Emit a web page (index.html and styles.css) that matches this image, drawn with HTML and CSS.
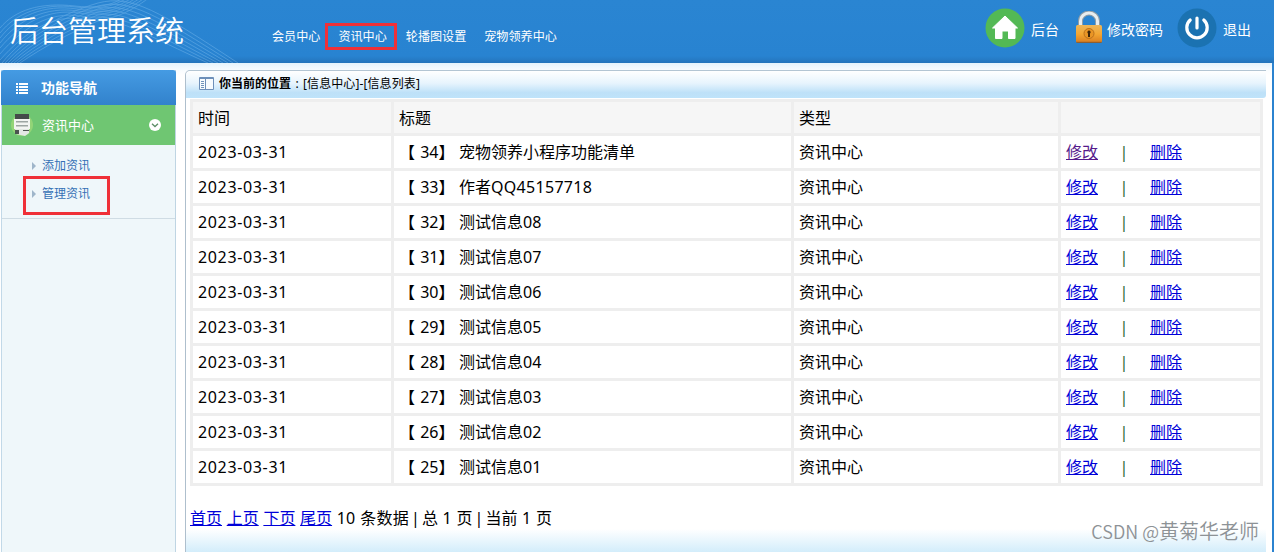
FILE: index.html
```html
<!DOCTYPE html>
<html lang="zh-CN">
  <head>
    <meta charset="UTF-8" />
    <title>后台管理系统</title>
    <link rel="stylesheet" href="styles.css">
  </head>
  <body>
    <header class="header">
      <svg class="waves" width="260" height="63" viewBox="0 0 260 63">
        <g id="rise">
          <path d="M0 28C15 10 40 2 75 6S120 -1 130 -6" />
          <path d="M0 33C16 13 42 3 76 7S122 1 134 -6" />
          <path d="M0 38C17 16 44 4 77 9S124 3 138 -6" />
          <path d="M0 43C18 20 46 6 78 11S126 5 142 -6" />
          <path d="M0 48C20 24 48 8 79 13S128 7 146 -6" />
          <path d="M0 54C22 28 50 11 80 16S130 9 150 -6" />
          <path d="M0 60C24 33 52 14 81 19S132 11 154 -6" />
        </g>
        <g id="fall">
          <path d="M2 63C25 35 60 14 98 3C132 -6 160 12 238 63" />
          <path d="M5 63C28 37 62 17 98 6C130 -2 158 16 233 63" />
          <path d="M8 63C31 39 64 20 98 9C128 2 156 20 228 63" />
          <path d="M11 63C34 41 66 23 98 12C126 6 154 24 223 63" />
          <path d="M14 63C37 43 68 26 98 15C124 10 152 28 218 63" />
          <path d="M17 63C40 45 70 29 98 18C122 14 150 32 213 63" />
          <path d="M20 63C43 47 72 32 98 21C120 18 148 36 208 63" />
        </g>
      </svg>
      <h1 class="title">后台管理系统</h1>
      <nav class="nav">
        <a href="#">会员中心</a>
        <a href="#" class="current">资讯中心</a>
        <a href="#">轮播图设置</a>
        <a href="#">宠物领养中心</a>
      </nav>
      <div class="tools">
        <a href="#" class="home">
          <svg width="40" height="40" viewBox="0 0 40 40">
            <circle cx="20" cy="20" r="19.5" fill="#53b955" />
            <path d="M20 8L32.500 20H30V30.500H23.500V23H17V30.500H10.500V20H7.500Z" fill="#fff" stroke="#fff" stroke-linejoin="round" />
          </svg>
          <span>后台</span>
        </a>
        <a href="#" class="lock">
          <svg width="28" height="34" viewBox="0 0 28 34">
            <defs>
              <linearGradient id="gold" x2="0" y2="1">
                <stop offset="0" stop-color="#edb65a" />
                <stop offset=".5" stop-color="#f3a632" />
                <stop offset=".9" stop-color="#de8422" />
                <stop offset="1" stop-color="#725034" />
              </linearGradient>
            </defs>
            <path d="M5.500 17V10a8.500 8 0 0 1 17 0v7" fill="none" stroke="#8d9da8" stroke-width="5" />
            <path d="M5.500 17V10a8.500 8 0 0 1 17 0v7" fill="none" stroke="#e8edef" stroke-width="3" />
            <rect x="1" y="14" width="26" height="18" rx="1.500" fill="url(#gold)" />
            <circle cx="14" cy="22.500" r="5" fill="#e99525" stroke="#bb711c" />
            <path d="M14 19.500a1.700 1.700 0 0 1 1 3v3.500h-2v-3.500a1.700 1.700 0 0 1 1-3z" fill="#3c2409" />
          </svg>
          <span>修改密码</span>
        </a>
        <a href="#" class="exit">
          <svg width="40" height="40" viewBox="0 0 40 40">
            <circle cx="20" cy="20" r="19.500" fill="#1b72b1" />
            <path d="M13.200 12a10.200 10.200 0 1 0 13.600 0M20 10v10" fill="none" stroke="#fff" stroke-width="3.200" stroke-linecap="round" />
          </svg>
          <span>退出</span>
        </a>
      </div>
    </header>

    <div class="wrap">
      <aside class="sidebar">
        <div class="side-title">
          <svg width="12" height="12" viewBox="0 0 12 12" fill="#fff">
            <path d="M0 1h2v2H0zM3 1h9v2H3zM0 4h2v2H0zM3 4h9v2H3zM0 7h2v2H0zM3 7h9v2H3zM0 10h2v2H0zM3 10h9v2H3z" />
          </svg>
          <span>功能导航</span>
        </div>
        <div class="side-group">
          <svg width="24" height="24" viewBox="0 0 24 24">
            <circle cx="12" cy="12" r="11" fill="#93d477" />
            <path d="M5 1h14v6H5z" fill="#444b49" />
            <path d="M4 6h16v10H4z" fill="#f2f4f1" />
            <path d="M6 8h12v1.500H6zM6 12h12v1.500H6z" fill="#9da5a2" />
            <path d="M5 16h14v4l-4 3-9-2z" fill="#e3e8e3" />
            <path d="M5 17h4v4H5zM13 17h6v1h-6z" fill="#4b5350" />
          </svg>
          <span>资讯中心</span>
          <svg class="toggle" width="12" height="12" viewBox="0 0 12 12">
            <circle cx="6" cy="6" r="6" fill="#fff" />
            <path d="M3 4.700l3 2.800 3-2.800" fill="none" stroke="#5c8d67" stroke-width="1.300" />
          </svg>
        </div>
        <ul class="side-list">
          <li><a href="#">添加资讯</a></li>
          <li class="current"><a href="#">管理资讯</a></li>
        </ul>
      </aside>

      <main class="main">
        <div class="crumb">
          <svg width="15" height="14" viewBox="0 0 15 14">
            <path d="M.5.5h14v12H.5z" fill="#f7fbfe" stroke="#6d8fb9" />
            <path d="M0 1.500h15M6.500 2v11" stroke="#6d8fb9" />
            <path d="M2 4.500h3M2 6.500h3M2 8.500h3M2 10.500h3" stroke="#7194bb" />
          </svg>
          <b>你当前的位置</b><i>:</i><span>[信息中心]-[信息列表]</span>
        </div>
        <table class="list">
          <colgroup>
            <col class="c-date"><col class="c-title"><col class="c-type"><col class="c-action">
          </colgroup>
          <thead>
            <tr><th>时间</th><th>标题</th><th>类型</th><th></th></tr>
          </thead>
          <tbody>
            <tr>
              <td class="date">2023-03-31</td>
              <td><span class="no">【 34】</span>宠物领养小程序功能清单</td>
              <td>资讯中心</td>
              <td><a href="#" class="visited">修改</a><span class="bar">|</span><a href="#">删除</a></td>
            </tr>
            <tr>
              <td class="date">2023-03-31</td>
              <td><span class="no">【 33】</span>作者<span class="qq">QQ45157718</span></td>
              <td>资讯中心</td>
              <td><a href="#">修改</a><span class="bar">|</span><a href="#">删除</a></td>
            </tr>
            <tr>
              <td class="date">2023-03-31</td>
              <td><span class="no">【 32】</span>测试信息08</td>
              <td>资讯中心</td>
              <td><a href="#">修改</a><span class="bar">|</span><a href="#">删除</a></td>
            </tr>
            <tr>
              <td class="date">2023-03-31</td>
              <td><span class="no">【 31】</span>测试信息07</td>
              <td>资讯中心</td>
              <td><a href="#">修改</a><span class="bar">|</span><a href="#">删除</a></td>
            </tr>
            <tr>
              <td class="date">2023-03-31</td>
              <td><span class="no">【 30】</span>测试信息06</td>
              <td>资讯中心</td>
              <td><a href="#">修改</a><span class="bar">|</span><a href="#">删除</a></td>
            </tr>
            <tr>
              <td class="date">2023-03-31</td>
              <td><span class="no">【 29】</span>测试信息05</td>
              <td>资讯中心</td>
              <td><a href="#">修改</a><span class="bar">|</span><a href="#">删除</a></td>
            </tr>
            <tr>
              <td class="date">2023-03-31</td>
              <td><span class="no">【 28】</span>测试信息04</td>
              <td>资讯中心</td>
              <td><a href="#">修改</a><span class="bar">|</span><a href="#">删除</a></td>
            </tr>
            <tr>
              <td class="date">2023-03-31</td>
              <td><span class="no">【 27】</span>测试信息03</td>
              <td>资讯中心</td>
              <td><a href="#">修改</a><span class="bar">|</span><a href="#">删除</a></td>
            </tr>
            <tr>
              <td class="date">2023-03-31</td>
              <td><span class="no">【 26】</span>测试信息02</td>
              <td>资讯中心</td>
              <td><a href="#">修改</a><span class="bar">|</span><a href="#">删除</a></td>
            </tr>
            <tr>
              <td class="date">2023-03-31</td>
              <td><span class="no">【 25】</span>测试信息01</td>
              <td>资讯中心</td>
              <td><a href="#">修改</a><span class="bar">|</span><a href="#">删除</a></td>
            </tr>
          </tbody>
        </table>
        <div class="pager">
          <a href="#">首页</a> <a href="#">上页</a> <a href="#">下页</a> <a href="#">尾页</a> <span class="count">10 条数据</span><span class="sep">|</span>总 1 页<span class="sep">|</span>当前 1 页
        </div>
      </main>
    </div>
    <div class="watermark"><span>CSDN @</span>黄菊华老师</div>
  </body>
</html>
```

FILE: styles.css
```css
* {
  box-sizing: border-box;
}
body {
  margin: 0;
  height: 552px;
  overflow: hidden;
  position: relative;
  background: #fff;
  color: #000;
  font-family: "Noto Sans", "Noto Sans CJK SC", sans-serif;
  font-size: 16px;
}
svg {
  display: block;
  flex: none;
}

/* header */
.header {
  position: relative;
  display: flex;
  height: 63px;
  background: linear-gradient(#2a85d2, #2883d1 56px, #2474bb);
  color: #fff;
}
.header a {
  color: #fff;
  text-decoration: none;
}
.waves {
  position: absolute;
  left: 0;
  top: 0;
  fill: none;
  stroke: #8fc8f5;
  stroke-width: 0.7;
  opacity: 0.5;
}
.title {
  position: relative;
  width: 262px;
  margin: 0;
  padding-left: 10px;
  font-size: 29px;
  font-weight: 350;
  line-height: 62px;
  white-space: nowrap;
}
.nav {
  display: flex;
  align-items: flex-start;
  padding-top: 23px;
  font-size: 12.1px;
  line-height: 28px;
  white-space: nowrap;
}
.nav a {
  padding: 0 0 0 10px;
  margin-right: 8px;
}
.nav a:first-child {
  padding-left: 10px;
}
.nav a.current {
  height: 27px;
  margin: 0 -1px 0 -3px;
  padding: 0 7px 0 10px;
  border: 3px solid #ef3038;
  line-height: 22px;
}
.tools {
  display: flex;
  margin-left: auto;
  padding: 8px 23px 0 0;
  font-size: 14px;
}
.tools a {
  display: flex;
  height: 40px;
  align-items: center;
}
.tools span {
  padding-top: 1px;
}
.home span {
  margin: 0 16px 0 6px;
}
.lock span {
  margin: 0 14px 0 4px;
}
.exit span {
  margin-left: 6px;
}

/* two columns under the header */
.wrap {
  display: flex;
  height: 489px;
  padding: 7px 6px 0 1px;
  border-right: 2px solid #2b83d0;
  background: linear-gradient(#e5f3fc, #fafdff 8px, #fff 12px);
}
.sidebar {
  width: 175px;
  border-left: 1px solid #c2d9e8;
  border-right: 1px solid #bfd5e3;
  background: #eff7fa;
  font-size: 12px;
}
.side-title {
  display: flex;
  align-items: center;
  height: 35px;
  margin: 0 -1px;
  padding-left: 15px;
  gap: 13px;
  border-radius: 3px 3px 0 0;
  background: linear-gradient(#459be3, #3282cc);
  color: #fff;
  font-size: 14px;
  font-weight: bold;
}
.side-title span {
  padding-bottom: 2px;
}
.side-group {
  display: flex;
  align-items: center;
  height: 40px;
  padding: 0 14px 0 8px;
  background: #6fc672;
  color: #fff;
  font-size: 13px;
}
.side-group span {
  margin-left: 8px;
  padding-bottom: 2px;
}
.toggle {
  margin-left: auto;
}
.side-list {
  height: 74px;
  margin: 0;
  padding: 7px 0 0 21px;
  border-bottom: 1px solid #cfdce4;
  list-style: none;
}
.side-list li {
  width: 87px;
  height: 24px;
  padding-left: 9px;
  line-height: 28px;
}
.side-list li::before {
  content: "";
  display: inline-block;
  margin-right: 6px;
  border: 4px solid transparent;
  border-left-color: #9fb6ca;
  border-right: 0;
}
.side-list a {
  color: #3470b5;
  text-decoration: none;
}
.side-list .current {
  height: 39px;
  padding-left: 6px;
  border: 3px solid #ef3038;
  line-height: 29px;
}

/* content */
.main {
  flex: 1;
  margin-left: 9px;
  border-left: 1px solid #aebfcd;
  border-top: 1px solid #b3c5d3;
  border-radius: 5px 0 0 0;
  background: linear-gradient(#fff, #fff) top / 100% 458px no-repeat,
    linear-gradient(#fff 458px, #d3edfb);
}
.crumb {
  display: flex;
  align-items: center;
  height: 27px;
  padding: 0 0 2px 13px;
  border-radius: 5px 0 3px 0;
  background: linear-gradient(#fff, #e7f4fd 45%, #bee1f8 80%, #bfe3fa);
  font-size: 12px;
}
.crumb b {
  margin-left: 5px;
}
.crumb i {
  width: 12px;
  text-align: center;
  font-style: normal;
}
.crumb span {
  letter-spacing: 0.1px;
}
.crumb b,
.crumb span {
  padding-bottom: 1px;
}
.list {
  width: 1073px;
  margin: 1px 0 0 4px;
  table-layout: fixed;
  border-spacing: 3px;
  background: #eee;
}
.c-date {
  width: 198px;
}
.c-title {
  width: 397px;
}
.c-type {
  width: 264px;
}
.list th,
.list td {
  height: 32px;
  padding: 0 5px;
  background: #fff;
  font-weight: normal;
  line-height: 30px;
  text-align: left;
  white-space: nowrap;
}
.list th {
  height: 31px;
  background: #f6f6f6;
}
.list .date {
  letter-spacing: 0.65px;
}
.qq {
  letter-spacing: 0.3px;
}
.no {
  display: inline-block;
  width: 60px;
  word-spacing: 1px;
}
.list a,
.pager a {
  color: #0000d8;
  text-decoration: underline;
}
.list a.visited {
  color: #551a8b;
}
.bar {
  display: inline-block;
  width: 52px;
  text-align: center;
  color: #1f6b35;
}
.pager {
  margin: 20px 0 0 4px;
  line-height: 24px;
  word-spacing: 0.5px;
}
.count {
  letter-spacing: 0.2px;
}
.sep {
  display: inline-block;
  width: 13px;
  text-align: center;
}

.watermark {
  position: absolute;
  right: 15px;
  bottom: 5px;
  color: #8d9296;
  font: 350 20px/30px "Liberation Sans", "Noto Sans CJK SC", sans-serif;
}
.watermark span {
  font-family: "Noto Sans CJK SC", sans-serif;
  font-size: 18px;
}
```
